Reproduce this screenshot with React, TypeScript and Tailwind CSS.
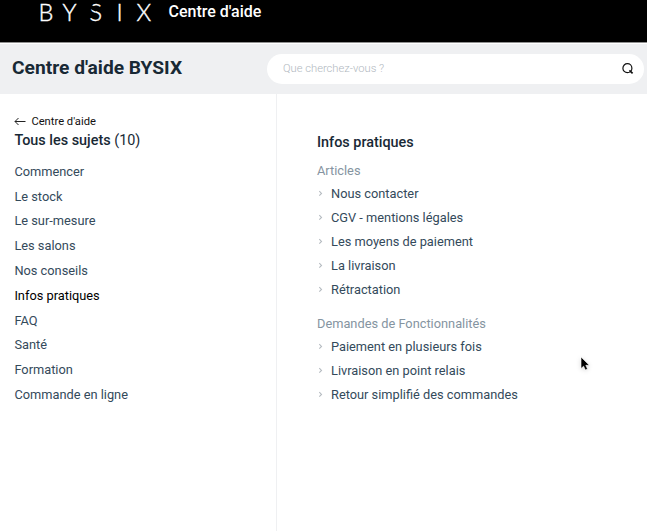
import { FC } from "react";

interface LinkListProps {
  title: string;
  items: string[];
}

const topics = [
  "Commencer",
  "Le stock",
  "Le sur-mesure",
  "Les salons",
  "Nos conseils",
  "Infos pratiques",
  "FAQ",
  "Santé",
  "Formation",
  "Commande en ligne",
];

const articles = [
  "Nous contacter",
  "CGV - mentions légales",
  "Les moyens de paiement",
  "La livraison",
  "Rétractation",
];

const requests = [
  "Paiement en plusieurs fois",
  "Livraison en point relais",
  "Retour simplifié des commandes",
];

const Logo: FC = () => (
  <div className="flex h-6 w-[113px] font-['Lato'] text-[23.5px] leading-6 font-light text-white [-webkit-text-stroke:0.4px_white]">
    <span className="w-[24px]">B</span>
    <span className="w-[27px]">Y</span>
    <span className="relative w-[27px]">
      S
      {/* Slanted cut through the upper bowl */}
      <span className="absolute top-[6px] left-[-1px] h-[3.5px] w-[8px] rotate-[25deg] bg-black" />
    </span>
    <span className="w-[20px]">I</span>
    <span>X</span>
  </div>
);

const SearchIcon: FC = () => (
  <svg
    width="12"
    height="12"
    viewBox="0 0 12 12"
    fill="none"
    stroke="#111"
    className="relative -left-px"
  >
    <circle cx="5.4" cy="5.2" r="4.5" strokeWidth="1.2" />
    <path d="M7.4 7.4L10.6 10.4" strokeWidth="1.7" />
  </svg>
);

const LinkList: FC<LinkListProps> = ({ title, items }) => (
  <section>
    <h3 className="h-[23px] text-[12.8px] leading-6 text-[#8594a1]">{title}</h3>
    <ul>
      {items.map((item) => (
        <li key={item} className="flex h-6 items-center">
          <svg
            width="14"
            height="8"
            viewBox="0 0 14 8"
            fill="none"
            stroke="#b5bbc0"
            strokeWidth="1.1"
          >
            <path d="M2.3 1.2L4.5 3.4L2.3 5.6" />
          </svg>
          <a href="#" className="text-[12.8px] leading-6 text-[#344a5b]">
            {item}
          </a>
        </li>
      ))}
    </ul>
  </section>
);

const App: FC = () => {
  return (
    <div className="relative flex h-[531px] w-[647px] flex-col overflow-hidden bg-white font-['Roboto',sans-serif]">
      <header className="flex h-[43px] shrink-0 items-start border-b border-[#909090] bg-black pl-[38.5px]">
        <Logo />
        <span className="ml-[17px] h-6 text-[16px] leading-6 font-medium text-white">
          Centre d'aide
        </span>
      </header>
      <div className="flex h-[51px] shrink-0 items-center justify-between border-t border-white bg-[#eff0f2] pr-[3px] pl-3">
        <h1 className="-mt-[3px] text-[19.2px] leading-6 font-bold text-[#182935]">
          Centre d'aide BYSIX
        </h1>
        <div className="-mt-px flex h-[30px] w-[377px] items-center justify-between rounded-full bg-white pr-[9px] pl-4">
          <input
            type="text"
            placeholder="Que cherchez-vous ?"
            className="w-64 pt-px text-[11.2px] font-light outline-none placeholder:text-[#b0b7be]"
          />
          <SearchIcon />
        </div>
      </div>
      <div className="flex flex-1">
        <aside className="w-[277px] border-r border-[#eff0f2] pt-[19px] pl-[14.4px]">
          <a
            href="#"
            className="flex h-[18px] items-center text-[11.2px] leading-[18px] text-[#111]"
          >
            <svg
              width="12"
              height="9"
              viewBox="0 0 12 9"
              fill="none"
              stroke="#222"
              className="relative -top-px mr-[5px]"
            >
              <path d="M11.5 4.5H1M4.5 1L1 4.5L4.5 8" />
            </svg>
            Centre d'aide
          </a>
          <h2 className="h-5 text-[14.4px] leading-5 font-medium text-[#182935]">
            Tous les sujets <span className="font-normal">(10)</span>
          </h2>
          <ul className="mt-[8px]">
            {topics.map((topic) => (
              <li key={topic} className="flex h-[24.8px] items-center">
                <a
                  href="#"
                  className={
                    topic === "Infos pratiques"
                      ? "text-[12.8px] text-black"
                      : "text-[12.8px] text-[#344a5b]"
                  }
                >
                  {topic}
                </a>
              </li>
            ))}
          </ul>
        </aside>
        <main className="flex-1 pt-[37px] pl-10">
          <h2 className="mb-[4px] h-6 text-[14.4px] leading-6 font-medium text-[#182935]">
            Infos pratiques
          </h2>
          <LinkList title="Articles" items={articles} />
          <div className="h-[10px]" />
          <LinkList title="Demandes de Fonctionnalités" items={requests} />
        </main>
      </div>
      <svg
        width="12"
        height="17"
        viewBox="0 0 12 17"
        className="absolute top-[356px] left-[580px] drop-shadow-sm"
      >
        <path
          d="M1 1V12.5L3.6 10.2L5.4 14L7.5 13L5.8 9.3H9.3Z"
          fill="#000"
          stroke="#fff"
          strokeWidth="0.6"
        />
      </svg>
    </div>
  );
};

export default App;
